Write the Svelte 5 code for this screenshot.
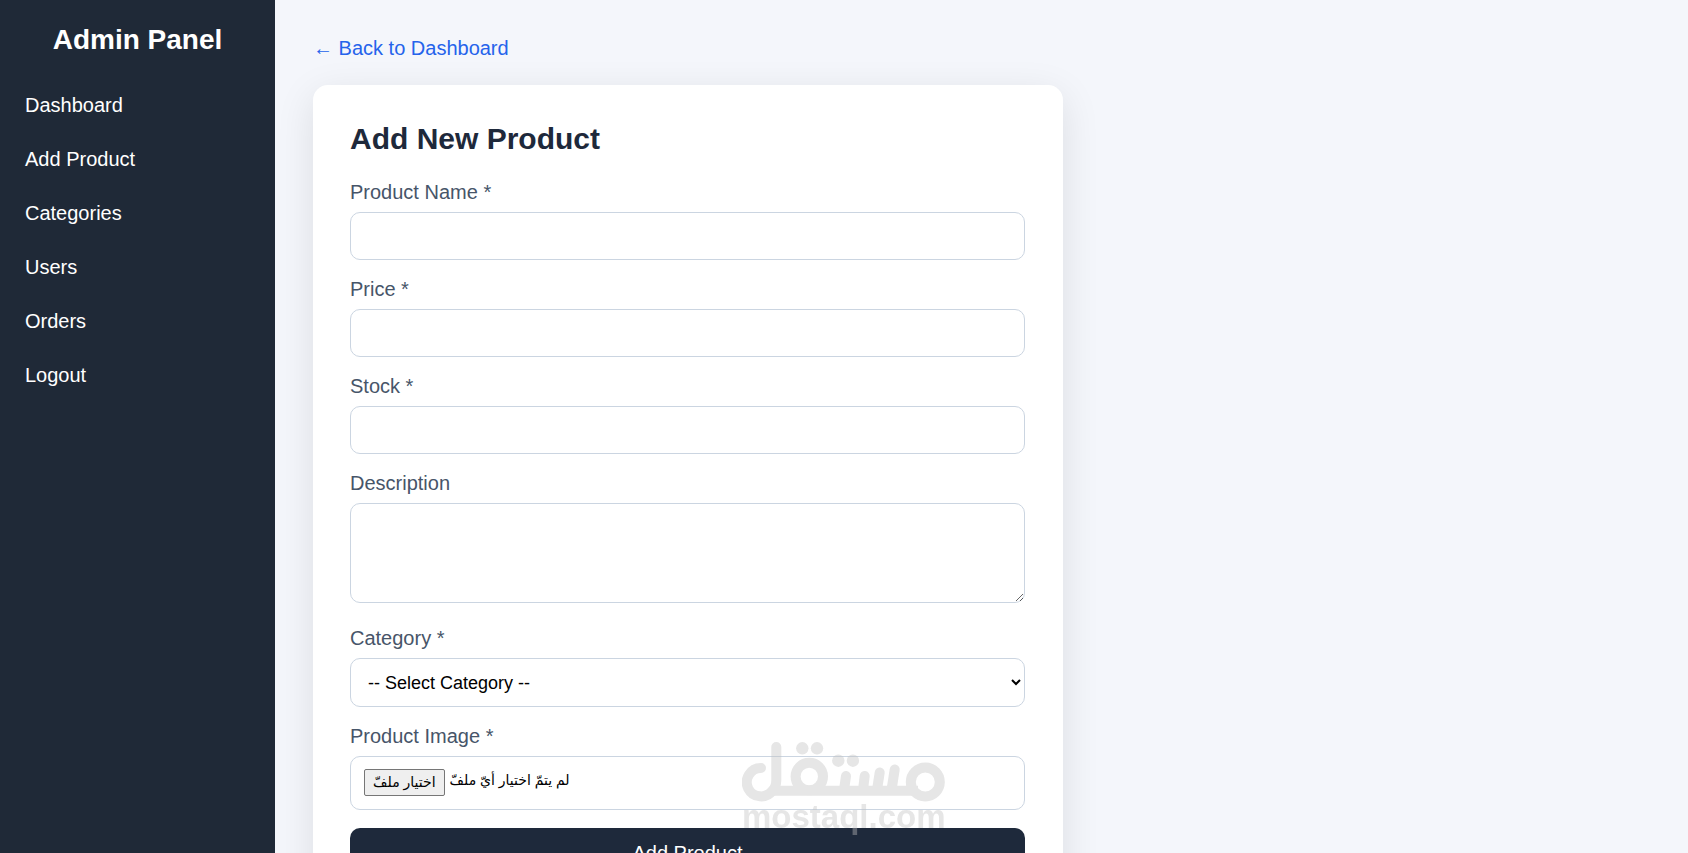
<script lang="ts">
  const navItems = ['Dashboard', 'Add Product', 'Categories', 'Users', 'Orders', 'Logout'];
  const textFields = [
    { id: 'name', label: 'Product Name *', type: 'text' },
    { id: 'price', label: 'Price *', type: 'number' },
    { id: 'stock', label: 'Stock *', type: 'number' }
  ];

  let fileName = $state('');

  function pickFile(event: Event): void {
    const input = event.currentTarget as HTMLInputElement;
    fileName = input.files?.[0]?.name ?? '';
  }

  function submitProduct(event: Event): void {
    event.preventDefault();
  }
</script>

<div class="layout">
  <aside class="sidebar">
    <h2 class="brand">Admin Panel</h2>
    <nav>
      {#each navItems as item}
        <a class="nav-link" href="#{item.toLowerCase().replace(' ', '-')}">{item}</a>
      {/each}
    </nav>
  </aside>

  <main class="content">
    <a class="back-link" href="#dashboard">← Back to Dashboard</a>

    <form class="card" onsubmit={submitProduct}>
      <h1 class="title">Add New Product</h1>

      {#each textFields as field}
        <div class="field">
          <label for={field.id}>{field.label}</label>
          <input class="control" id={field.id} name={field.id} type={field.type} />
        </div>
      {/each}

      <div class="field description">
        <label for="description">Description</label>
        <textarea class="control" id="description" name="description"></textarea>
      </div>

      <div class="field">
        <label for="category">Category *</label>
        <select class="control" id="category" name="category">
          <option value="">-- Select Category --</option>
        </select>
      </div>

      <div class="field">
        <label for="image">Product Image *</label>
        <div class="control file">
          <span class="file-button" lang="ar" dir="rtl">اختيار ملفّ</span>
          <span class="file-name" lang="ar" dir="rtl">{fileName || 'لم يتمّ اختيار أيّ ملفّ'}</span>
          <input class="file-input" id="image" name="image" type="file" accept="image/*" onchange={pickFile} />
        </div>
      </div>

      <button class="submit" type="submit">Add Product</button>

      <div class="watermark" aria-hidden="true">
        <svg viewBox="0 0 204 60" fill="none" stroke="currentColor" stroke-width="10" stroke-linecap="round">
          <path d="M19 26A14.200 14.200 0 1 0 30.500 48.500Q34.300 45 34.300 38V5" />
          <path d="M28 48.700H176" stroke-linecap="butt" />
          <circle cx="67.300" cy="34.500" r="13.700" />
          <circle cx="183.300" cy="40" r="14.500" />
          <path d="M102 48L104 34M121 48L122.700 34M135 48L137.700 30.500M149.500 48L152.700 27.500" />
          <g fill="currentColor" stroke="none">
            <circle cx="60.300" cy="6.300" r="6.200" />
            <circle cx="75" cy="6.300" r="6.200" />
            <circle cx="96.300" cy="18.700" r="6.200" />
            <circle cx="110.900" cy="18.700" r="6.200" />
          </g>
        </svg>
        <span>mostaql.com</span>
      </div>
    </form>
  </main>
</div>

<style>
  :global(body) {
    background: #f4f6fb;
    font-family: 'Liberation Sans', Arial, sans-serif;
    font-size: 20px;
    line-height: 23px;
  }

  .layout {
    display: flex;
    height: 100vh;
    overflow: hidden;
  }

  .sidebar {
    flex: 0 0 275px;
    background: #1f2937;
    color: #ffffff;
  }

  .brand {
    margin: 24px 0 22px;
    font-size: 28px;
    line-height: 32px;
    text-align: center;
  }

  .nav-link {
    display: block;
    padding: 0 25px;
    color: #ffffff;
    line-height: 54px;
    text-decoration: none;
  }

  .nav-link:hover {
    background: #374151;
  }

  .content {
    flex: 1;
    min-width: 0;
    padding: 37px 38px;
    overflow: auto;
    scrollbar-width: none;
  }

  .back-link {
    display: table;
    margin-bottom: 25px;
    color: #2563eb;
    text-decoration: none;
  }

  .card {
    position: relative;
    box-sizing: border-box;
    max-width: 750px;
    padding: 37px 38px 37px 37px;
    border-radius: 15px;
    background: #ffffff;
    box-shadow: 0 10px 38px rgba(0, 0, 0, 0.1);
  }

  .title {
    margin: 0 0 25px;
    color: #1e293b;
    font-size: 30px;
    line-height: 34px;
  }

  .field {
    margin-bottom: 18px;
  }

  .description {
    margin-bottom: 24px;
  }

  label {
    display: block;
    margin-bottom: 8px;
    color: #475569;
  }

  .control {
    display: block;
    box-sizing: border-box;
    width: 100%;
    height: 48px;
    padding: 0 14px;
    border: 1px solid #cbd5e1;
    border-radius: 10px;
    background: #ffffff;
    color: #000000;
    font-family: inherit;
    font-size: 18px;
  }

  textarea.control {
    height: 100px;
    padding: 14px;
    resize: vertical;
  }

  select.control {
    height: 49px;
    padding: 0 0 0 13px;
  }

  .file {
    position: relative;
    display: flex;
    align-items: flex-start;
    gap: 5px;
    height: 54px;
    padding: 12px 13px;
    font-family: 'Liberation Sans', 'DejaVu Sans', sans-serif;
    font-size: 14px;
  }

  .file-button {
    padding: 1px 8px;
    border: 1px solid #767676;
    border-radius: 2px;
    background: #efefef;
  }

  .file-input {
    position: absolute;
    inset: 0;
    width: 100%;
    height: 100%;
    opacity: 0;
    cursor: pointer;
  }

  .submit {
    width: 100%;
    height: 50px;
    border: 0;
    border-radius: 10px;
    background: #1e293b;
    color: #ffffff;
    font-family: inherit;
    font-size: 20px;
    cursor: pointer;
  }

  .watermark {
    position: absolute;
    top: 657px;
    left: 429px;
    width: 204px;
    color: #c0c0c0;
    opacity: 0.4;
    pointer-events: none;
  }

  .watermark svg {
    display: block;
    width: 204px;
    height: 60px;
  }

  .watermark span {
    display: block;
    font-size: 33px;
    font-weight: 700;
    line-height: 30px;
  }
</style>
